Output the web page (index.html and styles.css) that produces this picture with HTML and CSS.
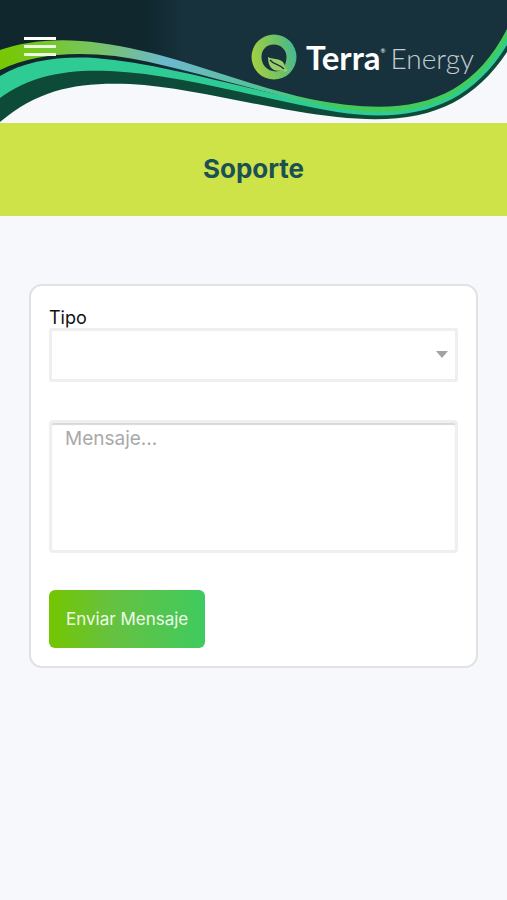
FILE: index.html
```html
<!DOCTYPE html>
<html lang="es">
<head>
<meta charset="utf-8">
<meta name="viewport" content="width=device-width, initial-scale=1">
<title>Soporte</title>
<link rel="stylesheet" href="styles.css">
</head>
<body>
<header class="header">
  <svg class="waves" viewBox="0 0 507 123" preserveAspectRatio="none" aria-hidden="true">
    <defs>
      <linearGradient id="sky" x1="0" x2="1" y1="0" y2="0">
        <stop offset="0" stop-color="#10272e"/><stop offset=".29" stop-color="#10272e"/>
        <stop offset=".36" stop-color="#17323d"/><stop offset="1" stop-color="#17323d"/>
      </linearGradient>
      <linearGradient id="ribbon" gradientUnits="userSpaceOnUse" x1="0" x2="507" y1="0" y2="0">
        <stop offset="0" stop-color="#78c800"/><stop offset=".08" stop-color="#76c824"/>
        <stop offset=".2" stop-color="#78c36a"/><stop offset=".33" stop-color="#6bb8cf"/>
        <stop offset=".4" stop-color="#65bcb8"/><stop offset=".55" stop-color="#4fc48b"/>
        <stop offset=".65" stop-color="#43ca58"/><stop offset="1" stop-color="#40cd5c"/>
      </linearGradient>
    </defs>
    <path fill="url(#sky)" d="M0 0H507V40C470 114 410 118 337 110C260 98 180 68 110 62C65 59 30 64 0 88Z"/>
    <path fill="#0d4b38" d="M0 96C30 72 70 68 115 69C190 73 270 102 337 110C410 119 466 106 507 42V52C470 107 423 126 337 117C270 110 190 87 130 84C80 82 40 88 0 122Z"/>
    <path fill="#2fcb94" d="M0 76C25 61 58 56 95 58C170 64 250 92 337 106C415 115 469 101 507 34V45C468 109 410 123 337 112C260 99 180 74 110 71C65 69 30 76 0 98Z"/>
    <path fill="url(#ribbon)" d="M0 50C25 41 60 37 100 43C175 53 240 84 310 99C402 117 467 107 507 29V38C467 109 404 119 337 108C260 94 180 65 115 56C70 51 30 55 0 70Z"/>
  </svg>
  <button class="menu" type="button" aria-label="Menú"><span></span><span></span><span></span></button>
  <a class="brand" href="#">
    <svg class="mark" viewBox="0 0 46 46" aria-hidden="true">
      <defs>
        <linearGradient id="ring" x1="0" y1=".65" x2="1" y2=".45">
          <stop offset="0" stop-color="#a5d142"/><stop offset=".6" stop-color="#70c164"/><stop offset="1" stop-color="#45ba91"/>
        </linearGradient>
      </defs>
      <path fill="url(#ring)" fill-rule="evenodd" d="M23 .5A22.5 22.5 0 1 1 23 45.5A22.5 22.5 0 1 1 23 .5ZM23 10.500C15 10.500 10.500 16 10.500 23C10.500 31 16 37 25 37.500C31 37 35.500 31 35.500 23C35.500 16 30 10.500 23 10.500Z"/>
      <path fill="#9bce68" d="M17 23C22 26 34 23 34 34L37 36L34 38L31 36C22 39 17 33 17 23Z"/>
      <path fill="none" stroke="#17323d" stroke-width="1.3" d="M19 26C23 31 27 29 33 35"/>
    </svg>
    <span class="brand-name">Terra</span><span class="reg">®</span><span class="brand-sub">Energy</span>
  </a>
</header>
<div class="title-bar"><h1>Soporte</h1></div>
<main>
  <form class="card">
    <label for="tipo">Tipo</label>
    <div class="select-wrap">
      <select id="tipo"><option value=""></option></select>
      <svg class="caret" viewBox="0 0 12 7" aria-hidden="true"><path fill="#a2a2a2" d="M0 0H12L6 7Z"/></svg>
    </div>
    <textarea aria-label="Mensaje" placeholder="Mensaje..."></textarea>
    <button class="send" type="submit">Enviar Mensaje</button>
  </form>
</main>
</body>
</html>
```

FILE: styles.css
```css
* { box-sizing: border-box; }

body {
  margin: 0;
  min-height: 100vh;
  background: #f6f8fc;
  color: #111;
  font-family: Inter, "Liberation Sans", sans-serif;
}

.header {
  position: relative;
  display: flex;
  justify-content: space-between;
  align-items: flex-start;
  height: 123px;
  padding: 33px 33px 0 24px;
}

.waves {
  position: absolute;
  inset: 0;
  width: 100%;
  height: 100%;
}

.menu {
  position: relative;
  display: flex;
  flex-direction: column;
  gap: 5px;
  margin: 0;
  padding: 4px 0;
  border: 0;
  background: none;
}

.menu span {
  width: 32px;
  height: 3px;
  background: #fff;
}

.menu span:nth-child(n+2) { background: #e9fbdc; }

.brand {
  position: relative;
  display: flex;
  align-items: center;
  color: #fff;
  font-family: Lato, sans-serif;
  line-height: 46px;
  text-decoration: none;
}

.mark {
  width: 46px;
  height: 46px;
  margin-right: 9px;
}

.brand-name {
  font-size: 33px;
  font-weight: 700;
}

.reg {
  align-self: flex-start;
  font-size: 6px;
  line-height: 36px;
}

.brand-sub {
  margin-left: 5px;
  padding-top: 2px;
  color: #c3ccd2;
  font-size: 28px;
  font-weight: 300;
}

.title-bar {
  height: 93px;
  padding-top: 29px;
  background: #cee347;
  text-align: center;
}

h1 {
  margin: 0;
  color: #1c5057;
  font-size: 26px;
  font-weight: 700;
  line-height: 34px;
}

main { padding: 68px 29px; }

.card {
  display: flex;
  flex-direction: column;
  padding: 22px 18px 18px;
  border: 2px solid #dfe1e2;
  border-radius: 13px;
  background: #fff;
}

label {
  font-size: 18px;
  line-height: 20px;
}

.select-wrap {
  position: relative;
  margin-bottom: 38px;
}

select {
  display: block;
  width: 100%;
  height: 54px;
  border: 3px solid #efefef;
  border-radius: 2px;
  background: #fff;
  appearance: none;
}

.caret {
  position: absolute;
  top: 23px;
  right: 10px;
  width: 12px;
  height: 7px;
  pointer-events: none;
}

textarea {
  display: block;
  width: 100%;
  height: 133px;
  margin-bottom: 37px;
  padding: 4px 13px;
  border: 3px solid #efefef;
  border-radius: 4px;
  background: #fff;
  box-shadow: inset 0 2px 1px #d9d9d9;
  font-family: inherit;
  font-size: 19px;
  line-height: 24px;
  resize: none;
}

textarea::placeholder {
  color: #a9a9a9;
  opacity: 1;
}

.send {
  align-self: flex-start;
  padding: 18px 17px;
  border: 0;
  border-radius: 6px;
  background: linear-gradient(90deg, #74c600, #66c140 40%, #3fcb5f);
  color: #effbe8;
  font-family: inherit;
  font-size: 17px;
  line-height: 22px;
}
```
